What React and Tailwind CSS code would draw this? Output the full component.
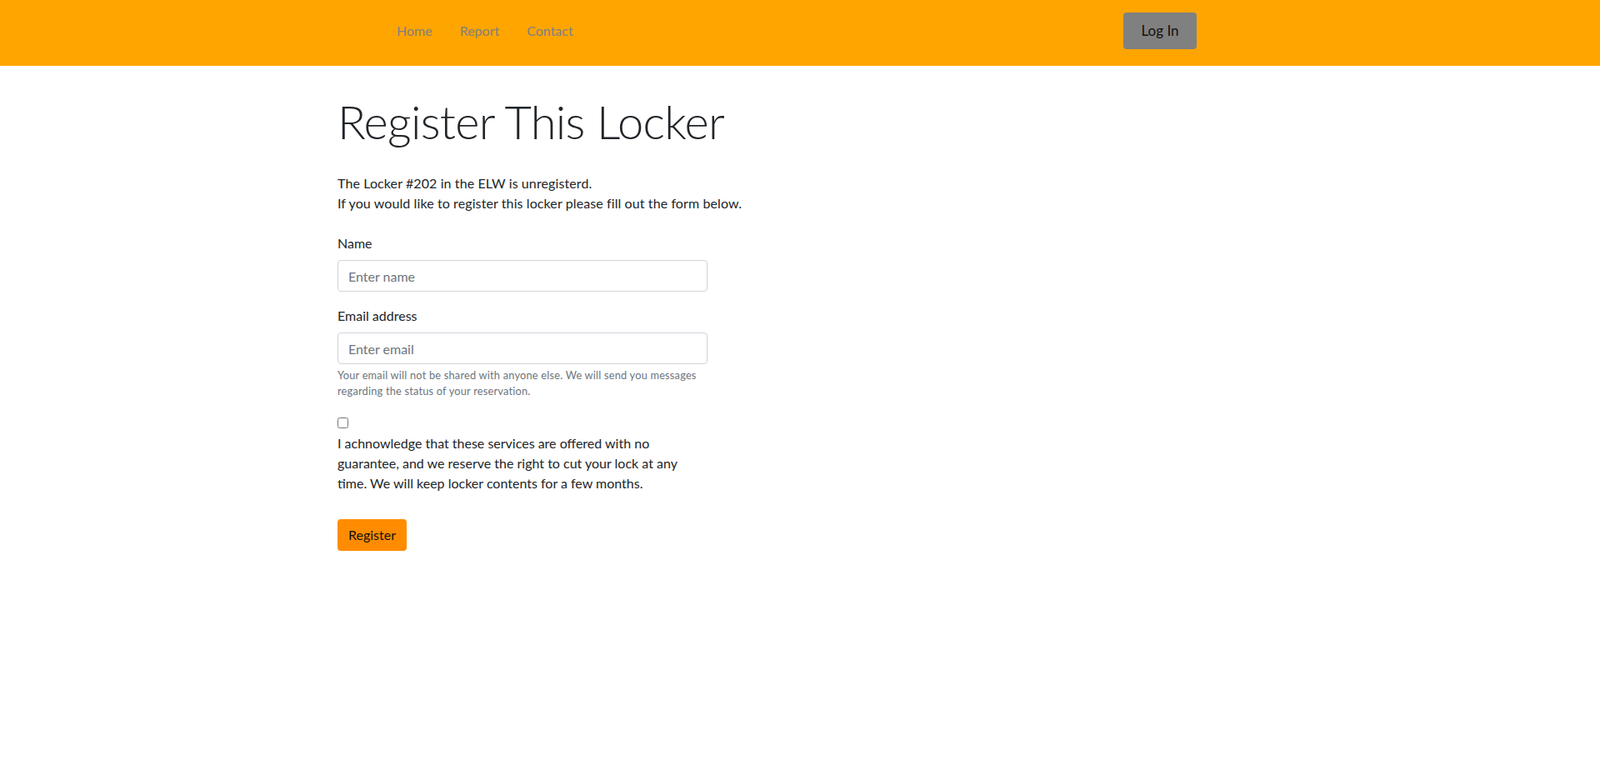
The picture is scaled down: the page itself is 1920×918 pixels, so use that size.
import React from 'react';

export default function App() {
    return (
        <div className="min-h-screen bg-white text-[#212529]" style={{ fontFamily: 'Lato, "Noto Sans", sans-serif' }}>
            {/* Navbar */}
            <nav className="h-[79px] bg-[#ffa500]">
                <div className="flex items-start pt-[15px]">
                    <div className="ml-[476px] flex h-[44px] items-center gap-[33px] text-[16px] text-[#808080]">
                        <a href="#">Home</a>
                        <a href="#">Report</a>
                        <a href="#">Contact</a>
                    </div>
                    <button className="ml-auto mr-[484px] h-[44px] w-[88px] rounded-[4px] bg-[#808080] text-[17px] text-[#111]">
                        Log In
                    </button>
                </div>
            </nav>

            {/* Form */}
            <main className="ml-[405px] w-[444px] pt-[33px]">
                <h1 className="whitespace-nowrap text-[56px] font-light leading-[1.2] tracking-[-0.7px]">Register This Locker</h1>
                <p className="mt-[29px] whitespace-nowrap text-[16px] leading-[24px] tracking-[0.1px]">
                    The Locker #202 in the ELW is unregisterd.
                    <br />
                    If you would like to register this locker please fill out the form below.
                </p>

                <form className="mt-[24px] text-[16px]">
                    <label className="block leading-[24px]">Name</label>
                    <input
                        type="text"
                        placeholder="Enter name"
                        className="mt-[8px] block h-[38px] w-full rounded-[4px] border border-[#ced4da] px-[12px] text-[16px] placeholder:text-[#6c757d]"
                    />

                    <label className="mt-[17px] block leading-[24px]">Email address</label>
                    <input
                        type="email"
                        placeholder="Enter email"
                        className="mt-[8px] block h-[38px] w-full rounded-[4px] border border-[#ced4da] px-[12px] text-[16px] placeholder:text-[#6c757d]"
                    />
                    <small className="mt-[4px] block text-[12.8px] leading-[19.2px] tracking-[0.2px] text-[#6c757d]">
                        Your email will not be shared with anyone else. We will send you messages regarding the status of your reservation.
                    </small>

                    <div className="mt-[16px] flex h-[24px] items-center">
                        <input type="checkbox" className="m-0 h-[13px] w-[13px]" />
                    </div>
                    <p className="leading-[24px]">
                        I achnowledge that these services are offered with no guarantee, and we reserve the right to cut your lock at any time. We will keep locker contents for a few months.
                    </p>

                    <button type="button" className="mt-[31px] h-[38px] w-[83px] rounded-[4px] bg-[#ff8c00] text-[16px] text-[#111]">
                        Register
                    </button>
                </form>
            </main>
        </div>
    );
}
